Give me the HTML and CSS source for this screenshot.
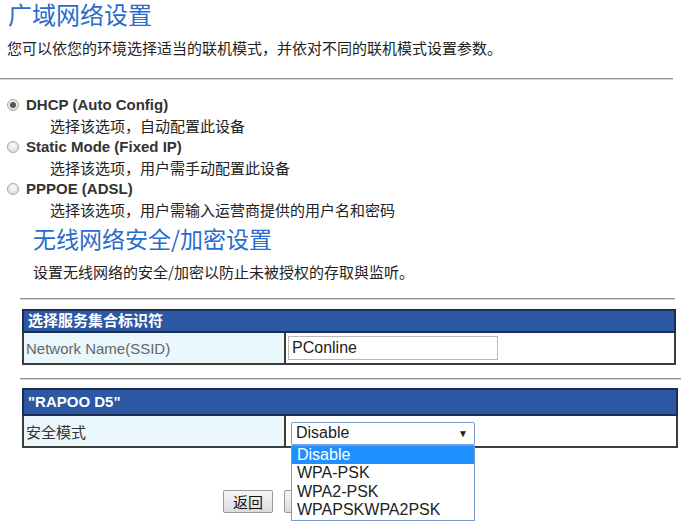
FILE: index.html
```html
<!DOCTYPE html>
<html lang="zh-CN">
<head>
  <meta charset="UTF-8">
  <title>广域网络设置</title>
  <link rel="stylesheet" href="styles.css">
</head>
<body>
  <!-- 广域网络 -->
  <h1 class="title">广域网络设置</h1>
  <p class="intro">您可以依您的环境选择适当的联机模式，并依对不同的联机模式设置参数。</p>
  <div class="rule"></div>

  <div class="modes">
    <div class="mode">
      <span class="radio checked"></span>
      <span class="mode-name">DHCP (Auto Config)</span>
    </div>
    <div class="mode-desc">选择该选项，自动配置此设备</div>
    <div class="mode">
      <span class="radio"></span>
      <span class="mode-name">Static Mode (Fixed IP)</span>
    </div>
    <div class="mode-desc">选择该选项，用户需手动配置此设备</div>
    <div class="mode">
      <span class="radio"></span>
      <span class="mode-name">PPPOE (ADSL)</span>
    </div>
    <div class="mode-desc">选择该选项，用户需输入运营商提供的用户名和密码</div>
  </div>

  <!-- 无线安全 -->
  <div class="wireless">
    <h1 class="title title-sub">无线网络安全/加密设置</h1>
    <p class="intro intro-sub">设置无线网络的安全/加密以防止未被授权的存取與监听。</p>
    <div class="rule rule-sub"></div>

    <table class="form-table ssid-table">
      <tr><th colspan="2">选择服务集合标识符</th></tr>
      <tr>
        <td class="label">Network Name(SSID)</td>
        <td class="value"><div class="text-input">PConline</div></td>
      </tr>
    </table>

    <div class="rule rule-mid"></div>

    <table class="form-table sec-table">
      <tr><th colspan="2">"RAPOO D5"</th></tr>
      <tr>
        <td class="label cn">安全模式</td>
        <td class="value">
          <div class="select-wrap">
            <div class="select-box">
              <span>Disable</span>
              <span class="arrow">▼</span>
            </div>
            <ul class="select-list">
              <li class="active">Disable</li>
              <li>WPA-PSK</li>
              <li>WPA2-PSK</li>
              <li>WPAPSKWPA2PSK</li>
            </ul>
          </div>
        </td>
      </tr>
    </table>

    <div class="buttons">
      <button class="btn">返回</button>
      <!-- 被下拉列表遮住的第二个按钮 -->
      <button class="btn" aria-label="应用"></button>
    </div>
  </div>
</body>
</html>
```

FILE: styles.css
```css
body {
  margin: 0;
  background: #fff;
  color: #222;
  font-family: "Liberation Sans", "Noto Sans CJK SC", sans-serif;
  width: 700px;
  height: 525px;
  overflow: hidden;
}

.title {
  margin: 0;
  padding-left: 8px;
  height: 28px;
  font-family: "Noto Sans CJK SC", sans-serif;
  font-weight: 400;
  font-size: 24px;
  line-height: 27px;
  color: #2a6ccc;
}

.intro {
  margin: 10px 0 0;
  padding-left: 7px;
  font-family: "Noto Sans CJK SC", sans-serif;
  font-size: 15px;
  line-height: 20px;
  color: #222;
}

.rule {
  margin-top: 20px;
  width: 673px;
  height: 1px;
  background: #8e8e8e;
  border-bottom: 1px solid #d8d8d8;
}

.modes {
  margin-top: 14px;
}

.mode {
  display: flex;
  align-items: center;
  height: 21px;
  padding-left: 7px;
}

.radio {
  width: 10px;
  height: 10px;
  border: 1px solid #a8a8a8;
  border-radius: 50%;
  background: radial-gradient(circle at 50% 35%, #fafafa, #d6d6d6);
  margin-right: 7px;
  position: relative;
}

.radio.checked::after {
  content: "";
  position: absolute;
  left: 2px;
  top: 2px;
  width: 6px;
  height: 6px;
  border-radius: 50%;
  background: #555;
}

.mode-name {
  font-weight: 700;
  font-size: 15px;
  color: #333;
}

.mode-desc {
  height: 21px;
  line-height: 21px;
  padding-left: 50px;
  font-family: "Noto Sans CJK SC", sans-serif;
  font-size: 15px;
  color: #222;
}

.title-sub {
  margin-top: 4px;
  padding-left: 33px;
  font-size: 23px;
  line-height: 28px;
}

.intro-sub {
  padding-left: 33px;
}

.rule-sub {
  margin-top: 16px;
  margin-left: 20px;
  width: 655px;
}

.rule-mid {
  margin-top: 13px;
  margin-left: 20px;
  width: 661px;
}

.form-table {
  margin-left: 22px;
  width: 654px;
  border-collapse: collapse;
  font-size: 15px;
}

.ssid-table {
  margin-top: 9px;
}

.sec-table {
  margin-top: 8px;
  width: 656px;
}

.form-table th {
  background: #2c58a3;
  border: 2px solid #1b2e52;
  color: #fff;
  text-align: left;
  padding: 0 4px;
  height: 20px;
  font-family: "Liberation Sans", "Noto Sans CJK SC", sans-serif;
  font-weight: 700;
  font-size: 15px;
  line-height: 20px;
}

.sec-table th {
  height: 24px;
}

.form-table td {
  border: 2px solid #3c3c3c;
  height: 30px;
  padding: 0;
}

.form-table .label {
  width: 258px;
  background: #eaf7fd;
  color: #666;
  padding-left: 2px;
}

.form-table .label.cn {
  color: #333;
  font-family: "Noto Sans CJK SC", sans-serif;
}

.form-table .value {
  background: #fff;
  padding-left: 2px;
}

.text-input {
  width: 205px;
  height: 22px;
  line-height: 22px;
  border: 1px solid #b8b8b8;
  padding-left: 3px;
  color: #222;
  font-size: 16px;
}

.select-wrap {
  position: relative;
  width: 184px;
  margin-left: 3px;
  margin-top: 4px;
}

.select-box {
  display: flex;
  justify-content: space-between;
  align-items: center;
  height: 21px;
  border: 1px solid #7a9cd3;
  border-radius: 2px;
  padding: 0 6px 0 4px;
  font-size: 16px;
  color: #222;
}

.arrow {
  font-size: 10px;
}

.select-list {
  position: absolute;
  left: 0;
  top: 23px;
  width: 182px;
  margin: 0;
  padding: 0;
  list-style: none;
  background: #fff;
  border: 1px solid #7a9cd3;
  z-index: 2;
}

.select-list li {
  height: 18.5px;
  line-height: 18px;
  padding-left: 5px;
  font-size: 16px;
  color: #222;
}

.select-list li.active {
  background: #1e90ff;
  color: #fff;
}

.buttons {
  display: flex;
  gap: 11px;
  margin-top: 42px;
  padding-left: 223px;
}

.btn {
  width: 50px;
  height: 23px;
  padding: 0;
  border: 1px solid #9a9a9a;
  border-radius: 2px;
  background: linear-gradient(#f6f6f6, #dcdcdc);
  font-family: "Noto Sans CJK SC", sans-serif;
  font-size: 15px;
  color: #111;
}
```
